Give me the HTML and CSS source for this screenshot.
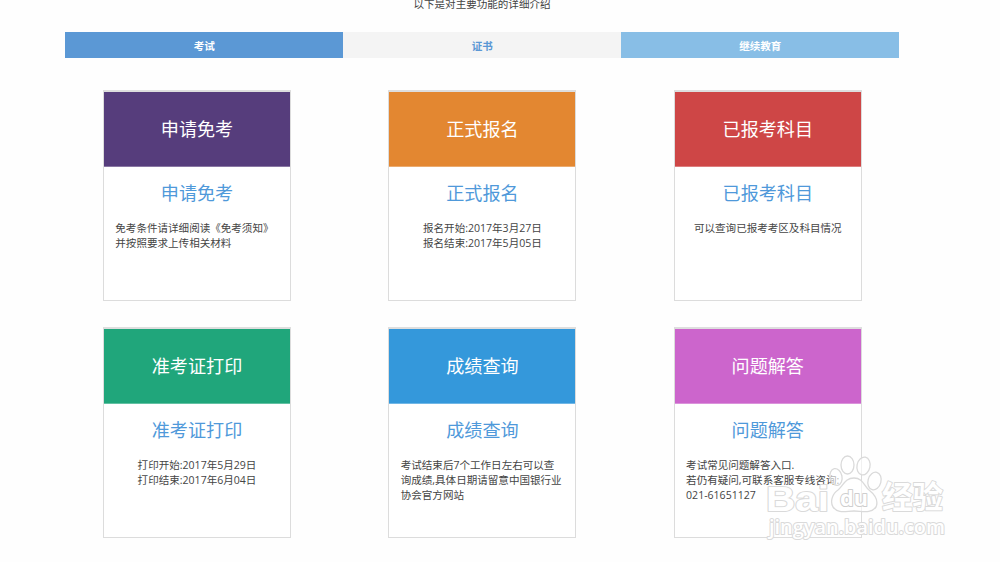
FILE: index.html
```html
<!DOCTYPE html>
<html lang="zh-CN">
<head>
<meta charset="utf-8">
<title>主要功能介绍</title>
<link rel="stylesheet" href="styles.css">
</head>
<body>
<main class="page">
  <p class="intro">以下是对主要功能的详细介绍</p>
  <nav class="tabs">
    <a class="tab tab-exam">考试</a>
    <a class="tab tab-cert">证书</a>
    <a class="tab tab-edu">继续教育</a>
  </nav>
  <section class="cards">
    <article class="card">
      <div class="banner purple">申请免考</div>
      <h2 class="title">申请免考</h2>
      <p class="text">免考条件请详细阅读《免考须知》<br>并按照要求上传相关材料</p>
    </article>
    <article class="card">
      <div class="banner orange">正式报名</div>
      <h2 class="title">正式报名</h2>
      <p class="text centered">报名开始:2017年3月27日<br>报名结束:2017年5月05日</p>
    </article>
    <article class="card">
      <div class="banner red">已报考科目</div>
      <h2 class="title">已报考科目</h2>
      <p class="text centered">可以查询已报考考区及科目情况</p>
    </article>
    <article class="card">
      <div class="banner green">准考证打印</div>
      <h2 class="title">准考证打印</h2>
      <p class="text centered">打印开始:2017年5月29日<br>打印结束:2017年6月04日</p>
    </article>
    <article class="card">
      <div class="banner blue">成绩查询</div>
      <h2 class="title">成绩查询</h2>
      <p class="text">考试结束后7个工作日左右可以查<br>询成绩,具体日期请留意中国银行业<br>协会官方网站</p>
    </article>
    <article class="card">
      <div class="banner pink">问题解答</div>
      <h2 class="title">问题解答</h2>
      <p class="text">考试常见问题解答入口.<br>若仍有疑问,可联系客服专线咨询:<br>021-61651127</p>
    </article>
  </section>
</main>
<svg class="watermark" viewBox="0 0 200 100" width="200" height="100">
  <g class="mark">
    <ellipse cx="81" cy="32" rx="6" ry="8.500" transform="rotate(-12 81 32)"/>
    <ellipse cx="92.500" cy="20" rx="6.500" ry="9"/>
    <ellipse cx="108.500" cy="21" rx="6.500" ry="9" transform="rotate(12 108.500 21)"/>
    <ellipse cx="119.500" cy="36" rx="6.500" ry="9" transform="rotate(15 119.500 36)"/>
    <path d="M99 33 C90 33 88 41 83 45 C77 49 75 57 78 62 C83 69 91 66 99 66 C107 66 116 69 121 62 C124 55 119 49 114 45 C109 41 108 33 99 33 Z"/>
    <text class="latin" x="11" y="65.500" textLength="63" lengthAdjust="spacingAndGlyphs">Bai</text>
    <text class="du" x="85" y="61" textLength="28" lengthAdjust="spacingAndGlyphs">du</text>
    <text class="cjk" x="127" y="63" textLength="61" lengthAdjust="spacingAndGlyphs">经验</text>
    <text class="site" x="14" y="89" textLength="176" lengthAdjust="spacingAndGlyphs">jingyan.baidu.com</text>
  </g>
</svg>
</body>
</html>
```
FILE: styles.css
```css
* { box-sizing: border-box; }
body {
  margin: 0;
  background: #fefefe;
  color: #444;
  font-family: "Open Sans", "Noto Sans CJK SC", sans-serif;
  font-size: 10.55px;
  line-height: 15px;
  overflow: hidden;
}
.page { width: 1000px; height: 562px; overflow: hidden; }
.intro { margin: -3px 0 0; padding-right: 36px; height: 34.500px; text-align: center; }
.tabs {
  display: grid;
  grid-template-columns: repeat(3, 278px);
  grid-template-rows: 26.500px;
  margin-left: 65.300px;
}
.tab { overflow: hidden; text-align: center; font-weight: bold; line-height: 28px; color: #fff; }
.tab-exam { background: #5b98d5; }
.tab-cert { background: #f4f4f4; color: #5b98d5; }
.tab-edu { background: #88bee6; }
.cards {
  display: grid;
  grid-template-columns: 188px 188px 188px;
  grid-auto-rows: 211px;
  gap: 26px 97.400px;
  margin: 32px 0 0 103px;
}
.card { border: 1px solid #dcdcdc; border-top: 2px solid #dedede; background: #fff; }
.banner {
  height: 75px;
  border-bottom: 1px solid rgba(255, 255, 255, .3);
  color: #fff;
  font-size: 18.100px;
  line-height: 75px;
  text-align: center;
}
.purple { background: #563d7c; }
.orange { background: #e38731; }
.red { background: #ce4646; }
.green { background: #20a67b; }
.blue { background: #3498db; }
.pink { background: #cc65cc; }
.title {
  margin: 14px 0 0;
  color: #4f99da;
  font-size: 18.100px;
  font-weight: normal;
  line-height: 24px;
  text-align: center;
}
.text { margin: 16px 0 0 11.300px; white-space: nowrap; }
.text.centered { margin-left: 0; text-align: center; }
.watermark { position: absolute; left: 755px; top: 445px; }
.mark { fill: rgba(255, 255, 255, .6); stroke: #dadada; stroke-width: 1.300; }
.mark text { paint-order: stroke; stroke-linejoin: round; stroke-width: 2; fill: #fff; }
.latin { font: bold 35px "Liberation Sans", sans-serif; }
.mark .du { font: bold 22px "Open Sans", sans-serif; stroke: #cecece; }
.cjk { font: bold 31px "Noto Sans CJK SC", sans-serif; }
.site { font: 600 19.500px "Open Sans", sans-serif; }
```
